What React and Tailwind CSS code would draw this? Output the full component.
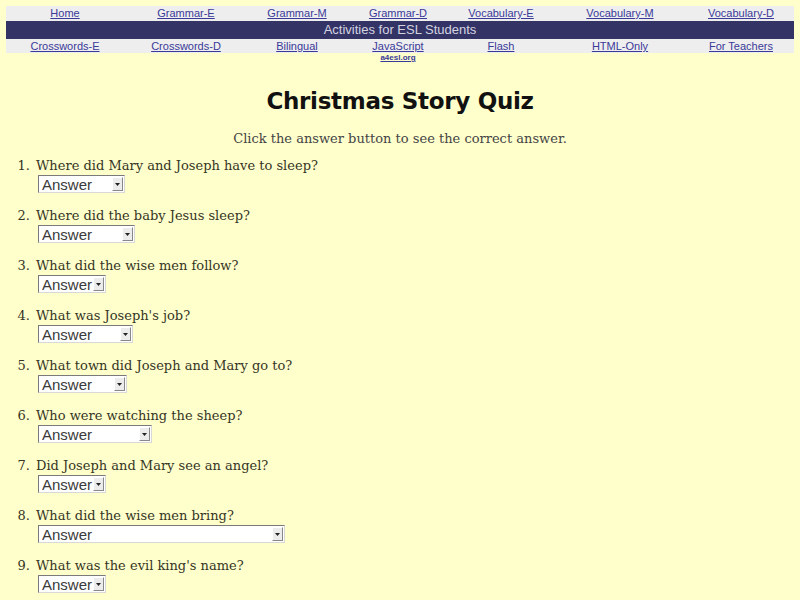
import React from "react";

const row1 = ["Home", "Grammar-E", "Grammar-M", "Grammar-D", "Vocabulary-E", "Vocabulary-M", "Vocabulary-D"];
const row3 = ["Crosswords-E", "Crosswords-D", "Bilingual", "JavaScript", "Flash", "HTML-Only", "For Teachers"];

const questions = [
  ["Where did Mary and Joseph have to sleep?", 87],
  ["Where did the baby Jesus sleep?", 97],
  ["What did the wise men follow?", 68],
  ["What was Joseph's job?", 95],
  ["What town did Joseph and Mary go to?", 89],
  ["Who were watching the sheep?", 114],
  ["Did Joseph and Mary see an angel?", 68],
  ["What did the wise men bring?", 247],
  ["What was the evil king's name?", 68],
];

const cols = "grid grid-cols-[118px_124px_98px_104px_102px_136px_106px]";

function Select({ width }) {
  return (
    <div
      className="flex h-[18px] items-center bg-white border border-t-[#7a7a7a] border-l-[#7a7a7a] border-b-[#d8d8d8] border-r-[#d8d8d8]"
      style={{ width }}
    >
      <span className="flex-1 pl-[3px] text-[15px] leading-none text-[#3a3a3a] font-['Liberation_Sans',sans-serif]">Answer</span>
      <span className="mr-[1px] flex h-[14px] w-[11px] items-center justify-center bg-[#ececec] border border-t-white border-l-white border-b-[#888] border-r-[#888]">
        <svg width="5" height="3" viewBox="0 0 5 3"><path d="M0 0h5L2.5 3z" fill="#222" /></svg>
      </span>
    </div>
  );
}

export default function App() {
  return (
    <div className="min-h-[600px] w-[800px] bg-[#ffffcc] pt-[6px] font-['Liberation_Sans',sans-serif]">
      <div className="mx-[6px]">
        <div className={`${cols} h-[15px] bg-[#eeeeee] text-[11px] leading-[15px]`}>
          {row1.map((t) => (
            <a key={t} className="text-center text-[#3a3a99] underline">{t}</a>
          ))}
        </div>
        <div className="h-[18px] bg-[#333366] text-center text-[13px] leading-[18px] text-[#d4d4e0]">
          Activities for ESL Students
        </div>
        <div className={`${cols} h-[14px] bg-[#eeeeee] text-[11px] leading-[14px]`}>
          {row3.map((t) => (
            <a key={t} className="text-center text-[#3a3a99] underline">{t}</a>
          ))}
        </div>
        <div className={`${cols} h-[10px]`}>
          <span />
          <span />
          <span />
          <a className="text-center text-[8px] font-bold leading-[10px] text-[#3a3a99] underline">a4esl.org</a>
        </div>
      </div>

      <h1 className="mt-[24px] text-center text-[23px] font-bold leading-[28px] text-[#111] font-['DejaVu_Sans',sans-serif] tracking-[-0.3px]">
        Christmas Story Quiz
      </h1>

      <p className="mt-[16px] text-center text-[13px] leading-[16px] text-[#444] font-['DejaVu_Serif',serif]">
        Click the answer button to see the correct answer.
      </p>

      <ol className="mt-[10px] font-['DejaVu_Serif',serif] text-[13px] text-[#353525]">
        {questions.map(([q, w], i) => (
          <li key={i} className="flex h-[50px]">
            <span className="w-[36px] pr-[6px] text-right leading-[18px]">{i + 1}.</span>
            <div className="flex flex-col">
              <span className="leading-[18px]">{q}</span>
              <div className="ml-[2px]">
                <Select width={w} />
              </div>
            </div>
          </li>
        ))}
      </ol>
    </div>
  );
}
